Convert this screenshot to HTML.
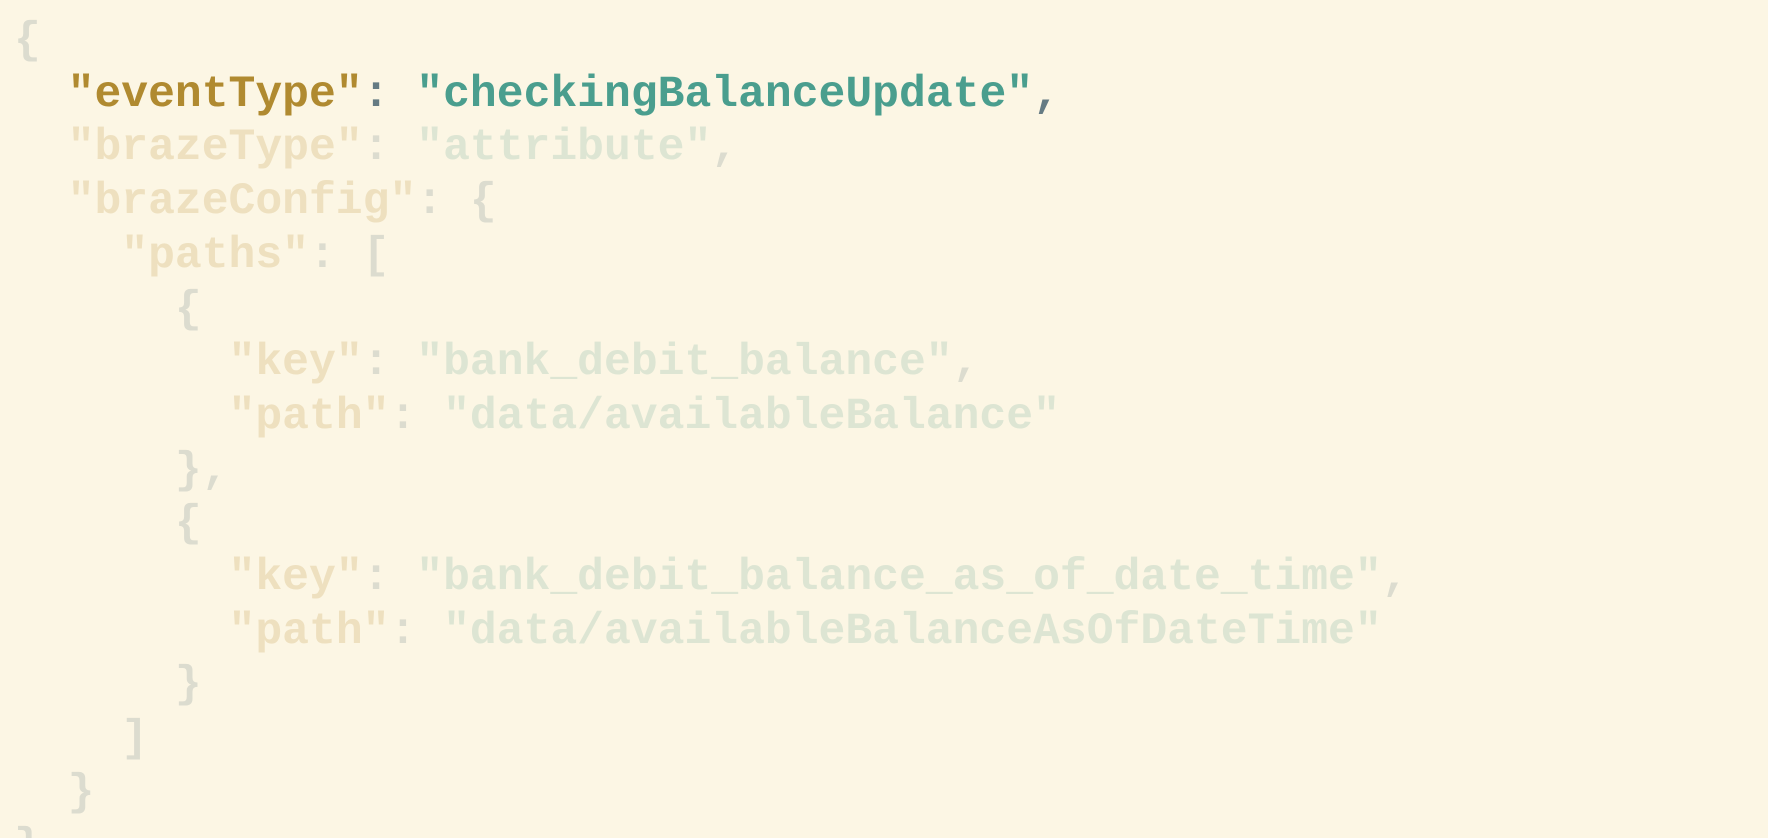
<!DOCTYPE html><html><head><style>
html,body{margin:0;background:#fcf6e4;width:1768px;height:838px;overflow:hidden}
pre{margin:0;padding:15px 0 0 14px;font-family:"Liberation Mono","Courier New",monospace;font-size:44.7px;line-height:53.7px;font-weight:bold;color:#dcdccf}
.k{color:#b08a30}.s{color:#4a9e8e}.p{color:#657b83}
.fk{color:#eee0bf}.fs{color:#dde5d3}
</style></head><body><pre>{
  <span class="k">"eventType"</span><span class="p">:</span> <span class="s">"checkingBalanceUpdate"</span><span class="p">,</span>
  <span class="fk">"brazeType"</span>: <span class="fs">"attribute"</span>,
  <span class="fk">"brazeConfig"</span>: {
    <span class="fk">"paths"</span>: [
      {
        <span class="fk">"key"</span>: <span class="fs">"bank_debit_balance"</span>,
        <span class="fk">"path"</span>: <span class="fs">"data/availableBalance"</span>
      },
      {
        <span class="fk">"key"</span>: <span class="fs">"bank_debit_balance_as_of_date_time"</span>,
        <span class="fk">"path"</span>: <span class="fs">"data/availableBalanceAsOfDateTime"</span>
      }
    ]
  }
}</pre></body></html>
